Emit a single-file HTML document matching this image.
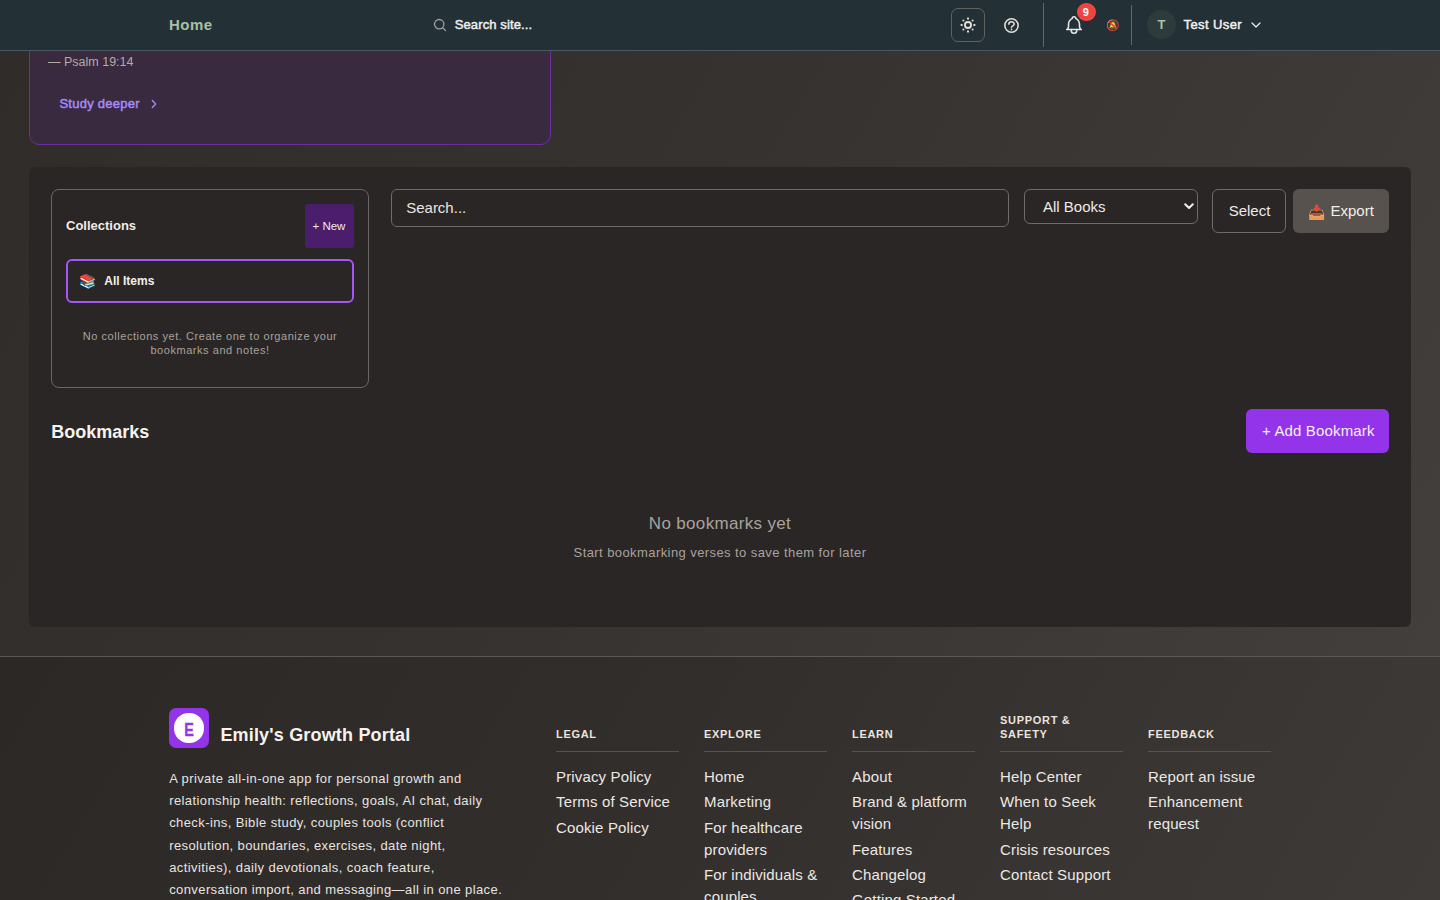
<!DOCTYPE html>
<html>
<head>
<meta charset="utf-8">
<style>
*{box-sizing:border-box;margin:0;padding:0}
html,body{width:1440px;height:900px;overflow:hidden}
body{font-family:"Liberation Sans",sans-serif;background:#37332f;color:#fff;position:relative}
.a{position:absolute;white-space:nowrap;line-height:1}
.bg{position:absolute;left:0;top:0;width:1440px;height:657px;background:linear-gradient(120deg,#302c2a 0%,#36322f 45%,#433f3c 100%)}
header{position:absolute;left:0;top:0;width:1440px;height:51px;background:#233036;border-bottom:1px solid #4a5860;z-index:5}
.card{position:absolute;left:29px;top:-60px;width:522px;height:205px;background:#3a2a3f;border:1px solid #6a2ea0;border-radius:10px}
.panel{position:absolute;left:29px;top:167px;width:1382px;height:460px;background:#2a2625;border-radius:6px}
footer{position:absolute;left:0;top:656px;width:1440px;height:244px;background:linear-gradient(120deg,#2c2826 0%,#322e2c 45%,#3e3a37 100%);border-top:1px solid #5d5854}
.ico{position:absolute;fill:none;stroke-linecap:round;stroke-linejoin:round}
.col{position:absolute;top:0;width:123px}
.ch{position:absolute;left:0;font-size:11px;font-weight:bold;letter-spacing:0.7px;color:#e9e4de;line-height:14px;white-space:nowrap}
.ul{position:absolute;left:0;top:94px;width:123px;height:1px;background:#57524d}
.lk{position:absolute;left:0;font-size:15px;letter-spacing:0.15px;color:#ece8e3;line-height:21.9px;white-space:nowrap}
</style>
</head>
<body>
<div class="bg"></div>
<header>
  <div class="a" style="left:169px;top:17.3px;font-size:15px;font-weight:bold;letter-spacing:0.44px;color:#a8c0a4">Home</div>
  <svg class="ico" style="left:433px;top:18px" width="14" height="14" viewBox="0 0 14 14"><circle cx="6.2" cy="6.2" r="4.7" stroke="#9aa0a4" stroke-width="1.3"/><path d="M9.7 9.7L12.6 12.6" stroke="#9aa0a4" stroke-width="1.3"/></svg>
  <div class="a" style="left:454.7px;top:18.2px;font-size:13px;letter-spacing:0.12px;-webkit-text-stroke:0.45px #eef0f0;color:#eef0f0">Search site...</div>
  <div class="a" style="left:951px;top:8px;width:34px;height:34px;border:1px solid #655f5a;border-radius:7px"></div>
  <svg class="ico" style="left:959.1px;top:16px" width="18" height="18" viewBox="0 0 18 18"><circle cx="9" cy="9" r="3.05" stroke="#e2ded9" stroke-width="1.9"/><g fill="#e2ded9"><rect x="8" y="1.6" width="2" height="2" rx="0.5"/><rect x="8" y="14.4" width="2" height="2" rx="0.5"/><rect x="1.6" y="8" width="2" height="2" rx="0.5"/><rect x="14.4" y="8" width="2" height="2" rx="0.5"/><circle cx="4.4" cy="4.5" r="1"/><circle cx="13.6" cy="4.5" r="1"/><circle cx="4.4" cy="13.5" r="1"/><circle cx="13.6" cy="13.5" r="1"/></g></svg>
  <svg class="ico" style="left:1002.6px;top:16.5px" width="17" height="17" viewBox="0 0 24 24" stroke="#e2ded9" stroke-width="2.2"><circle cx="12" cy="12" r="9.4"/><path d="M8.2 10.1a3.8 3.6 0 0 1 7.6 0.3c0 2-3.8 2.1-3.8 4.1"/><path d="M12 17.5h.01" stroke-width="2.6"/></svg>
  <div class="a" style="left:1043px;top:3px;width:1px;height:44px;background:#6a645e"></div>
  <svg class="ico" style="left:1062.9px;top:14px" width="22" height="22" viewBox="0 0 24 24" stroke="#e6e6e6" stroke-width="1.7"><path d="M10 5a2 2 0 1 1 4 0a7 7 0 0 1 4 6v3a4 4 0 0 0 2 3h-16a4 4 0 0 0 2 -3v-3a7 7 0 0 1 4 -6"/><path d="M9 17v1a3 3 0 0 0 6 0v-1"/></svg>
  <div class="a" style="left:1077.3px;top:2.7px;width:18.5px;text-indent:-1.5px;height:18.5px;border-radius:50%;background:#ef4444;color:#fff;font-size:11px;font-weight:bold;text-align:center;line-height:19px">9</div>
  <div class="a" style="left:1106px;top:18px;font-size:11px;line-height:14px">🔕</div>
  <div class="a" style="left:1131px;top:5px;width:1px;height:40px;background:#6a645e"></div>
  <div class="a" style="left:1147px;top:10px;width:29px;height:29px;border-radius:50%;background:#2e3b3d;color:#a8c0a4;font-size:13px;font-weight:bold;text-align:center;line-height:29px">T</div>
  <div class="a" style="left:1183.5px;top:18px;font-size:13px;letter-spacing:0.4px;-webkit-text-stroke:0.45px #f2f2f2;color:#f2f2f2">Test User</div>
  <svg class="ico" style="left:1248px;top:17px" width="16" height="16" viewBox="0 0 24 24" stroke="#e6e6e6" stroke-width="2"><path d="m6 9 6 6 6-6"/></svg>
</header>
<div class="card">
  <div class="a" style="left:18px;top:115.4px;font-size:12.5px;color:#b3aba4">— Psalm 19:14</div>
  <div class="a" style="left:29.4px;top:155.9px;font-size:13px;letter-spacing:0.25px;-webkit-text-stroke:0.45px #a78bfa;color:#a78bfa">Study deeper</div>
  <svg class="ico" style="left:117px;top:156px" width="14" height="14" viewBox="0 0 24 24" stroke="#a78bfa" stroke-width="2.2"><path d="m9 18 6-6-6-6"/></svg>
</div>
<div class="panel"></div>

<!-- collections -->
<div class="a" style="left:51px;top:189px;width:318px;height:199px;border:1px solid #6b6661;border-radius:8px"></div>
<div class="a" style="left:66px;top:218.9px;font-size:13px;font-weight:bold;color:#f0ece8">Collections</div>
<div class="a" style="left:305px;top:204px;width:49px;height:44px;background:#4a1e6c;border-radius:3px"></div>
<div class="a" style="left:312.5px;top:221.2px;font-size:11.5px;color:#f0ece8">+ New</div>
<div class="a" style="left:66px;top:259px;width:288px;height:44px;border:2px solid #a855f7;border-radius:6px"></div>
<div class="a" style="left:79px;top:272.5px;font-size:14px;line-height:17px">📚</div>
<div class="a" style="left:104.3px;top:275.1px;font-size:12px;font-weight:bold;color:#f2eee9">All Items</div>
<div class="a" style="left:51px;top:328.5px;width:318px;text-align:center;font-size:11px;letter-spacing:0.55px;line-height:14px;color:#a8a29e;white-space:normal">No collections yet. Create one to organize your<br>bookmarks and notes!</div>

<!-- toolbar -->
<div class="a" style="left:391px;top:189px;width:618px;height:38px;border:1px solid #716b66;border-radius:6px"></div>
<div class="a" style="left:406.2px;top:199.5px;font-size:15px;letter-spacing:0px;color:#e8e6e3">Search...</div>
<div class="a" style="left:1024px;top:189px;width:174px;height:35px;border:1px solid #716b66;border-radius:6px"></div>
<div class="a" style="left:1043px;top:199.3px;font-size:15px;color:#eeeae6">All Books</div>
<svg class="ico" style="left:1183px;top:200px" width="12" height="12" viewBox="0 0 12 12" stroke="#f0f0f0" stroke-width="2"><path d="M2.2 4.2 6 8 9.8 4.2"/></svg>
<div class="a" style="left:1212px;top:189px;width:74px;height:44px;border:1px solid #716b66;border-radius:6px"></div>
<div class="a" style="left:1228.7px;top:202.6px;font-size:15px;color:#eeeae6">Select</div>
<div class="a" style="left:1293px;top:189px;width:96px;height:44px;background:#57524e;border-radius:6px"></div>
<div class="a" style="left:1308px;top:203.5px;font-size:14px;line-height:16px">📥</div>
<div class="a" style="left:1330.5px;top:202.6px;font-size:15px;color:#f2eee9">Export</div>

<!-- bookmarks -->
<div class="a" style="left:51.2px;top:422.8px;font-size:18px;font-weight:bold;color:#f6f3ef">Bookmarks</div>
<div class="a" style="left:1246px;top:409px;width:143px;height:44px;background:#9333ea;border-radius:6px"></div>
<div class="a" style="left:1262px;top:422.8px;font-size:15px;letter-spacing:0.15px;color:#f6f0fc">+ Add Bookmark</div>
<div class="a" style="left:420px;top:514.9px;width:600px;text-align:center;font-size:17px;letter-spacing:0.33px;color:#a8a29e">No bookmarks yet</div>
<div class="a" style="left:420px;top:546px;width:600px;text-align:center;font-size:13px;letter-spacing:0.42px;color:#a8a29e">Start bookmarking verses to save them for later</div>

<footer>
  <div class="a" style="left:169px;top:51px;width:40px;height:40px;background:#9333ea;border-radius:7px"></div>
  <div class="a" style="left:174.4px;top:56.4px;width:29.2px;height:29.2px;background:#fff;border-radius:50%;color:#9333ea;font-size:18px;font-weight:bold;text-align:center;line-height:29.2px"><span style="display:inline-block;transform:scaleX(0.8);position:relative;top:2.6px;-webkit-text-stroke:0.3px #9333ea">E</span></div>
  <div class="a" style="left:220.4px;top:69.4px;font-size:18px;font-weight:bold;letter-spacing:0.18px;color:#f6f3ef">Emily's Growth Portal</div>
  <div class="a" style="left:169.2px;top:111.3px;font-size:13px;letter-spacing:0.4px;line-height:22.1px;color:#e7e4e0">A private all-in-one app for personal growth and<br>relationship health: reflections, goals, AI chat, daily<br>check-ins, Bible study, couples tools (conflict<br>resolution, boundaries, exercises, date night,<br>activities), daily devotionals, coach feature,<br>conversation import, and messaging—all in one place.</div>

  <div class="col" style="left:556px">
    <div class="ch" style="top:70px">LEGAL</div>
    <div class="ul"></div>
    <div class="lk" style="top:109px">Privacy Policy</div>
    <div class="lk" style="top:134.3px">Terms of Service</div>
    <div class="lk" style="top:159.6px">Cookie Policy</div>
  </div>
  <div class="col" style="left:704px">
    <div class="ch" style="top:70px">EXPLORE</div>
    <div class="ul"></div>
    <div class="lk" style="top:109px">Home</div>
    <div class="lk" style="top:134.3px">Marketing</div>
    <div class="lk" style="top:159.6px">For healthcare<br>providers</div>
    <div class="lk" style="top:206.6px">For individuals &amp;<br>couples</div>
  </div>
  <div class="col" style="left:852px">
    <div class="ch" style="top:70px">LEARN</div>
    <div class="ul"></div>
    <div class="lk" style="top:109px">About</div>
    <div class="lk" style="top:134.3px">Brand &amp; platform<br>vision</div>
    <div class="lk" style="top:182.2px">Features</div>
    <div class="lk" style="top:206.6px">Changelog</div>
    <div class="lk" style="top:231.9px">Getting Started</div>
  </div>
  <div class="col" style="left:1000px">
    <div class="ch" style="top:56px">SUPPORT &amp;<br>SAFETY</div>
    <div class="ul"></div>
    <div class="lk" style="top:109px">Help Center</div>
    <div class="lk" style="top:134.3px">When to Seek<br>Help</div>
    <div class="lk" style="top:182.2px">Crisis resources</div>
    <div class="lk" style="top:206.6px">Contact Support</div>
  </div>
  <div class="col" style="left:1148px">
    <div class="ch" style="top:70px">FEEDBACK</div>
    <div class="ul"></div>
    <div class="lk" style="top:109px">Report an issue</div>
    <div class="lk" style="top:134.3px">Enhancement<br>request</div>
  </div>
</footer>
</body>
</html>
